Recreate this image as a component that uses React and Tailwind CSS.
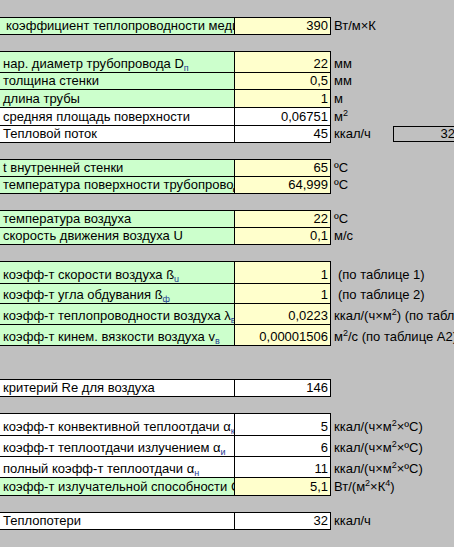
const Sub = ({ children }) => (
  <span className="relative top-[3px] text-[9px] leading-none text-[#1f3a93]">{children}</span>
);
const Sup = ({ children }) => (
  <span className="relative top-[-5px] text-[9px] leading-none">{children}</span>
);

const rows = [
  { gap: 17 },
  { h: 18, top: true, label: <span className="pl-[3px]">коэффициент теплопроводности меди</span>, value: "390", unit: "Вт/м×К", kind: "in" },
  { gap: 16 },
  { h: 22, top: true, label: <>нар. диаметр трубопровода D<Sub>п</Sub></>, value: "22", unit: "мм", kind: "in" },
  { h: 17, label: "толщина стенки", value: "0,5", unit: "мм", kind: "in" },
  { h: 18, label: "длина трубы", value: "1", unit: "м", kind: "in" },
  { h: 18, label: "средняя площадь поверхности", value: "0,06751", unit: <>м<Sup>2</Sup></>, kind: "out" },
  { h: 17, label: "Тепловой поток", value: "45", unit: "ккал/ч", kind: "out", box: "32" },
  { gap: 16 },
  { h: 18, top: true, label: "t внутренней стенки", value: "65", unit: "ºC", kind: "in" },
  { h: 17, label: "температура поверхности трубопровода", value: "64,999", unit: "ºC", kind: "in" },
  { gap: 16 },
  { h: 18, top: true, label: "температура воздуха", value: "22", unit: "ºC", kind: "in" },
  { h: 17, label: "скорость движения воздуха U", value: "0,1", unit: "м/с", kind: "in" },
  { gap: 16 },
  { h: 23, top: true, label: <>коэфф-т скорости воздуха ß<Sub>u</Sub></>, value: "1", unit: <span className="pl-[4px]">(по таблице 1)</span>, kind: "in" },
  { h: 20, label: <>коэфф-т угла обдувания ß<Sub>ф</Sub></>, value: "1", unit: <span className="pl-[4px]">(по таблице 2)</span>, kind: "in" },
  { h: 21, label: <>коэфф-т теплопроводности воздуха λ<Sub>в</Sub></>, value: "0,0223", unit: <>ккал/(ч×м<Sup>2</Sup>) (по таблице А1)</>, kind: "in" },
  { h: 21, label: <>коэфф-т кинем. вязкости воздуха v<Sub>в</Sub></>, value: "0,00001506", unit: <>м<Sup>2</Sup>/с (по таблице А2)</>, kind: "in" },
  { gap: 33 },
  { h: 18, top: true, label: "критерий Re для воздуха", value: "146", unit: "", kind: "out" },
  { gap: 16 },
  { h: 23, top: true, label: <>коэфф-т конвективной теплоотдачи α<Sub>к</Sub></>, value: "5", unit: <>ккал/(ч×м<Sup>2</Sup>×ºC)</>, kind: "out" },
  { h: 21, label: <>коэфф-т теплоотдачи излучением α<Sub>и</Sub></>, value: "6", unit: <>ккал/(ч×м<Sup>2</Sup>×ºC)</>, kind: "out" },
  { h: 21, label: <>полный коэфф-т теплоотдачи α<Sub>н</Sub></>, value: "11", unit: <>ккал/(ч×м<Sup>2</Sup>×ºC)</>, kind: "out" },
  { h: 18, label: "коэфф-т излучательной способности С", value: "5,1", unit: <>Вт/(м<Sup>2</Sup>×К<Sup>4</Sup>)</>, kind: "in" },
  { gap: 16 },
  { h: 18, top: true, label: "Теплопотери", value: "32", unit: "ккал/ч", kind: "out" },
  { gap: 17 },
];

function Row({ r }) {
  const border = r.top ? "border-y border-black" : "border-b border-black";
  const labelBg = r.kind === "in" ? "bg-[#ccffcc]" : "bg-white";
  const valueBg = r.kind === "in" ? "bg-[#ffffcc]" : "bg-white";
  return (
    <div className="flex" style={{ height: r.h }}>
      <div className={`w-[235px] shrink-0 overflow-hidden border-r pl-[3px] flex items-end pb-[1px] ${border} ${labelBg}`}>
        <span className="leading-[15px]">{r.label}</span>
      </div>
      <div className={`w-[96px] shrink-0 border-r flex items-end justify-end pr-[2px] pb-[1px] ${border} ${valueBg}`}>
        <span className="leading-[15px]">{r.value}</span>
      </div>
      <div className="flex items-end pl-[3px] pb-[2px]">
        <span className="leading-[15px]">{r.unit}</span>
        {r.box && (
          <div className="ml-[22px] self-start w-[70px] h-[16px] border border-black flex items-end justify-end pr-[7px]">
            <span className="leading-[14px]">{r.box}</span>
          </div>
        )}
      </div>
    </div>
  );
}

export default function App() {
  return (
    <div className="w-[454px] h-[547px] overflow-hidden bg-[#c0c0c0] whitespace-nowrap text-[13px] text-black font-['Liberation_Sans',Arial,sans-serif]">
      {rows.map((r, i) =>
        r.gap ? <div key={i} style={{ height: r.gap }} /> : <Row key={i} r={r} />
      )}
    </div>
  );
}
